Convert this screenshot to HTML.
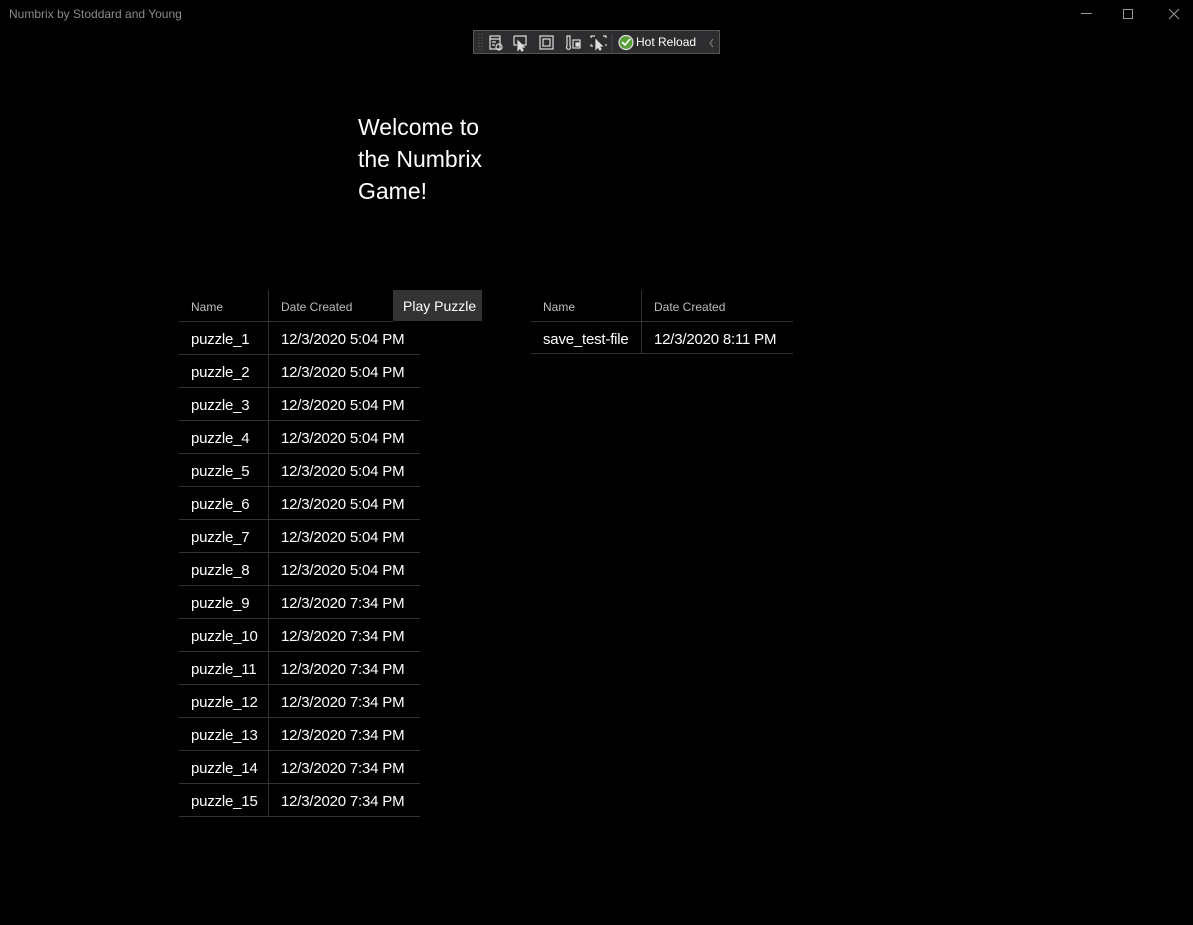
<!DOCTYPE html>
<html><head><meta charset="utf-8"><style>
*{margin:0;padding:0;box-sizing:border-box}
body{width:1193px;height:925px;background:#000;color:#fff;font-family:"Liberation Sans",sans-serif;position:relative;overflow:hidden}
.a{position:absolute;white-space:nowrap}
.title{left:9px;top:7px;font-size:12px;color:#8a8a8a}
.tb{left:473px;top:30px;width:247px;height:24px;background:#2d2d30;border:1px solid #555}
.hdr{font-size:12px;color:#bbb}
.cell{font-size:15px;color:#fff;letter-spacing:-0.2px}
.hl{position:absolute;height:1px;background:#333}
.vl{position:absolute;width:1px;background:#333}
</style></head><body>
<div class="a title">Numbrix by Stoddard and Young</div>
<div class="a" style="left:1081px;top:13px;width:11px;height:1px;background:#999"></div>
<div class="a" style="left:1123px;top:9px;width:10px;height:10px;border:1px solid #999"></div>
<svg class="a" style="left:1168px;top:8px" width="12" height="12"><path d="M1 1L11 11M11 1L1 11" stroke="#999" stroke-width="1"/></svg>

<div class="a tb">
<svg class="a" style="left:0;top:0" width="247" height="24" fill="none" stroke="#ddd" stroke-width="1.2">
<path d="M5 3v18M8 3v18" stroke="#555" stroke-dasharray="1 2"/>
<rect x="16" y="5" width="10" height="13"/><path d="M16 8h10M18 11h4M18 14h3"/><circle cx="25" cy="16" r="3"/>
<path d="M40 5h12v9h-4M40 5v9h3"/><path d="M44 10l0 9 2-2 2 3 1-1-2-3h3z" fill="#ddd"/>
<rect x="66" y="5" width="13" height="13"/><rect x="69" y="8" width="7" height="7"/>
<path d="M93 5v10a2 2 0 1 0 3 0V5z"/><rect x="99" y="9" width="7" height="8"/><rect x="102" y="12" width="3" height="3" fill="#ddd"/>
<path d="M117 7V5h4M129 5h3v2M117 13v2h2M132 13v2"/><path d="M122 9l0 9 2-2 2 3 1-1-2-3h3z" fill="#ddd"/>
<path d="M138 3v18" stroke="#444"/>
<circle cx="152" cy="11.5" r="7" fill="#5a9e3a" stroke="#ddd"/><path d="M148 11l3 3 5-6" stroke="#fff" stroke-width="1.6"/>
<path d="M239 8l-3 4 3 4" stroke="#777"/>
</svg>
<div class="a" style="left:162px;top:4px;font-size:12px;color:#fff">Hot Reload</div>
</div>

<div class="a" style="left:358px;top:111px;font-size:23px;line-height:32px;white-space:normal;width:160px">Welcome to<br>the Numbrix<br>Game!</div>

<div class="a hdr" style="left:191px;top:300px">Name</div>
<div class="a hdr" style="left:281px;top:300px">Date Created</div>
<div class="a" style="left:393px;top:290px;width:89px;height:31px;background:#333;font-size:14px;padding:8px 0 0 10px">Play Puzzle</div>
<div class="vl" style="left:268px;top:290px;height:527px"></div>
<div class="hl" style="left:179px;top:321px;width:214px"></div>

<div class="a hdr" style="left:543px;top:300px">Name</div>
<div class="a hdr" style="left:654px;top:300px">Date Created</div>
<div class="vl" style="left:641px;top:290px;height:64px"></div>
<div class="hl" style="left:531px;top:321px;width:262px"></div>
<div class="a cell" style="left:543px;top:331px">save_test-file</div>
<div class="a cell" style="left:654px;top:331px">12/3/2020 8:11 PM</div>
<div class="hl" style="left:531px;top:353px;width:262px"></div>

<div id="rows"></div>
<script>
var h='';for(var i=1;i<=15;i++){var y=321+(i-1)*33;var t=i<=8?'12/3/2020 5:04 PM':'12/3/2020 7:34 PM';
h+='<div class="a cell" style="left:191px;top:'+(y+10)+'px">puzzle_'+i+'</div><div class="a cell" style="left:281px;top:'+(y+10)+'px">'+t+'</div><div class="hl" style="left:179px;top:'+(y+33)+'px;width:241px"></div>';}
document.getElementById('rows').innerHTML=h;
</script>
</body></html>
